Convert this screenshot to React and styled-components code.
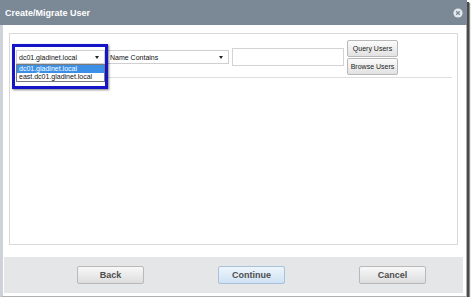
import styled, { createGlobalStyle } from "styled-components";

const GlobalStyle = createGlobalStyle`
  body {
    margin: 0;
    background: #ffffff;
    font-family: "Liberation Sans", Arial, sans-serif;
  }
`;

export default function App() {
  return (
    <>
      <GlobalStyle />
      <Dialog>
        <TitleBar>
          <Title>Create/Migrate User</Title>
          <svg width="10" height="10" viewBox="0 0 10 10">
            <circle cx="5" cy="5" r="4.6" fill="#e6e9ec" />
            <path d="M3.2 3.2 L6.8 6.8 M6.8 3.2 L3.2 6.8" stroke="#7b8896" strokeWidth="1.3" />
          </svg>
        </TitleBar>
        <Content>
          <Panel>
            <QueryRow>
              <DomainWrap>
                <SelectBox $width={89}>
                  <span>dc01.gladinet.local</span>
                  <Arrow />
                </SelectBox>
                <OptionList>
                  <Option $selected>dc01.gladinet.local</Option>
                  <Option>east.dc01.gladinet.local</Option>
                </OptionList>
                <Highlight />
              </DomainWrap>
              <SelectBox $width={122}>
                <span>Name Contains</span>
                <Arrow />
              </SelectBox>
              <SearchInput />
              <ButtonStack>
                <SmallButton>Query Users</SmallButton>
                <SmallButton>Browse Users</SmallButton>
              </ButtonStack>
            </QueryRow>
            <Divider />
          </Panel>
          <Footer>
            <FooterButton>Back</FooterButton>
            <FooterButton $primary>Continue</FooterButton>
            <FooterButton>Cancel</FooterButton>
          </Footer>
        </Content>
      </Dialog>
    </>
  );
}

const Dialog = styled.div`
  display: flex;
  flex-direction: column;
  width: 467px;
  height: 297px;
  background: #ffffff;
  box-shadow: 2px 2px 0 #4a4a4a, 3px 3px 1px #8a8a8a;
`;

const TitleBar = styled.div`
  display: flex;
  align-items: center;
  justify-content: space-between;
  height: 25px;
  padding: 0 4px 0 5px;
  box-sizing: border-box;
  background: #7b8896;
`;

const Title = styled.span`
  color: #ffffff;
  font-size: 9px;
  font-weight: bold;
`;

const Content = styled.div`
  display: flex;
  flex-direction: column;
  flex: 1;
  padding: 8px 0 3px;
  border-left: 3px solid #cdd3d9;
  border-right: 1px solid #b0b0b0;
  border-bottom: 1px solid #b0b0b0;
`;

const Panel = styled.div`
  height: 212px;
  margin: 0 8px 0 6px;
  box-sizing: border-box;
  border: 1px solid #d9d9d9;
`;

const QueryRow = styled.div`
  display: flex;
  align-items: flex-start;
  gap: 2px;
  padding: 6px 0 0 6px;
`;

const DomainWrap = styled.div`
  position: relative;
  margin-top: 10px;
`;

const SelectBox = styled.div`
  display: flex;
  align-items: center;
  justify-content: space-between;
  width: ${(p) => p.$width}px;
  height: 14px;
  margin-top: ${(p) => (p.$width > 100 ? "10px" : "0")};
  padding: 0 5px 0 2px;
  box-sizing: border-box;
  border: 1px solid #cfcfcf;
  background: #ffffff;
  font-size: 7px;
  color: #111;
`;

const Arrow = styled.span`
  width: 0;
  height: 0;
  border-left: 2.5px solid transparent;
  border-right: 2.5px solid transparent;
  border-top: 3px solid #222;
`;

const OptionList = styled.div`
  position: absolute;
  top: 14px;
  left: 0;
  width: 89px;
  box-sizing: border-box;
  border: 1px solid #7a7a7a;
  background: #ffffff;
`;

const Option = styled.div`
  height: 8px;
  line-height: 8px;
  padding-left: 2px;
  font-size: 7px;
  color: ${(p) => (p.$selected ? "#ffffff" : "#111")};
  background: ${(p) => (p.$selected ? "#3b8fe6" : "#ffffff")};
`;

const Highlight = styled.div`
  position: absolute;
  left: -4px;
  top: -6px;
  width: 96px;
  height: 45px;
  box-sizing: border-box;
  border: 3px solid #1414c8;
  box-shadow: 1px 1px 2px rgba(0, 0, 0, 0.5);
  pointer-events: none;
`;

const SearchInput = styled.input`
  width: 112px;
  height: 18px;
  margin: 8px 0 0 1px;
  padding: 0;
  box-sizing: border-box;
  border: 1px solid #d3d3d3;
  background: #ffffff;
`;

const ButtonStack = styled.div`
  display: flex;
  flex-direction: column;
  gap: 1px;
  margin-left: 1px;
`;

const SmallButton = styled.button`
  width: 51px;
  height: 17px;
  padding: 0;
  border: 1px solid #b8b8b8;
  border-radius: 2px;
  background: linear-gradient(#fbfbfb, #e2e2e2);
  font-family: "Liberation Sans", Arial, sans-serif;
  font-size: 7px;
  color: #222;
`;

const Divider = styled.div`
  height: 1px;
  margin: 2px 5px 0 2px;
  background: #dedede;
`;

const Footer = styled.div`
  display: flex;
  align-items: center;
  gap: 74px;
  height: 36px;
  margin: 12px 3px 0 1px;
  padding-left: 73px;
  background: #e5e6e8;
`;

const FooterButton = styled.button`
  width: 67px;
  height: 18px;
  padding: 0;
  border: 1px solid ${(p) => (p.$primary ? "#a8c2dc" : "#b9b9b9")};
  border-radius: 2px;
  background: ${(p) =>
    p.$primary
      ? "linear-gradient(#edf5fc, #cfe2f3)"
      : "linear-gradient(#f8f8f8, #dddddd)"};
  font-family: "Liberation Sans", Arial, sans-serif;
  font-size: 9px;
  font-weight: bold;
  color: #4e4e4e;
`;
